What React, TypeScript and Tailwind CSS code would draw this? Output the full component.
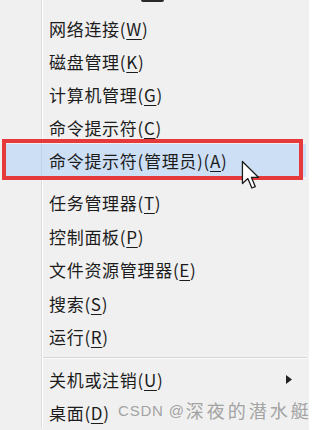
import React from "react";

type Item = { label: string; key: string; sub?: boolean };

const groupA: Item[] = [
  { label: "网络连接", key: "W" },
  { label: "磁盘管理", key: "K" },
  { label: "计算机管理", key: "G" },
  { label: "命令提示符", key: "C" },
];

const groupB: Item[] = [
  { label: "任务管理器", key: "T" },
  { label: "控制面板", key: "P" },
  { label: "文件资源管理器", key: "E" },
  { label: "搜索", key: "S" },
  { label: "运行", key: "R" },
];

const groupC: Item[] = [
  { label: "关机或注销", key: "U", sub: true },
  { label: "桌面", key: "D" },
];

const Label = ({ label, k }: { label: string; k: string }) => (
  <span className="text-[17px] tracking-[0.7px] text-[#1c1c1c] leading-none whitespace-nowrap">
    {label}(<span className="underline underline-offset-[3px] decoration-1">{k}</span>)
  </span>
);

const Row = ({ item, h }: { item: Item; h: string }) => (
  <div className={`flex items-center ${h}`}>
    <div className="w-[42px] self-stretch border-r border-[#dcdcdc] shadow-[1px_0_0_#ffffff]" />
    <div className="pl-[7px] flex-1 flex items-center">
      <Label label={item.label} k={item.key} />
      {item.sub && (
        <svg width="6" height="9" viewBox="0 0 6 9" className="ml-auto mr-[17px]">
          <path d="M0 0 L6 4.5 L0 9 Z" fill="#222" />
        </svg>
      )}
    </div>
  </div>
);

const Separator = ({ line }: { line: boolean }) => (
  <div className="flex h-[9px]">
    <div className="w-[42px] self-stretch border-r border-[#dcdcdc] shadow-[1px_0_0_#ffffff]" />
    <div className="flex-1 flex items-center pl-[1px] pr-[2px]">
      {line && <div className="w-full h-[2px] border-t border-[#d6d6d6] bg-white/70" />}
    </div>
  </div>
);

export default function App() {
  return (
    <div
      className="relative w-[324px] h-[430px] bg-white overflow-hidden"
      style={{ fontFamily: '"Noto Sans CJK SC", "Noto Sans", sans-serif' }}
    >
      <div className="w-[309px] h-full bg-[#f0f0f0] flex flex-col">
        <div className="flex h-[12px]">
          <div className="w-[42px] self-stretch border-r border-[#dcdcdc] shadow-[1px_0_0_#ffffff]" />
          <div className="ml-[99px] w-[23px] h-[2px] bg-[#2a2a2a] rounded-b" />
        </div>
        {groupA.map((it) => (
          <Row key={it.key} item={it} h="h-[33px]" />
        ))}
        <div className="flex items-center h-[33px] ml-[2px] mr-[3px] bg-[#cddff5]">
          <div className="w-[40px] self-stretch border-r border-[#c3d3e6]" />
          <div className="pl-[7px]">
            <Label label="命令提示符(管理员)" k="A" />
          </div>
        </div>
        <Separator line={false} />
        {groupB.map((it) => (
          <Row key={it.key} item={it} h="h-[33.5px]" />
        ))}
        <Separator line={true} />
        {groupC.map((it) => (
          <Row key={it.key} item={it} h="h-[33px]" />
        ))}
      </div>

      {/* red annotation box */}
      <div className="absolute left-[2px] top-[139px] w-[301px] h-[41px] border-[4px] border-[#e5393c]" />

      {/* mouse cursor */}
      <svg
        className="absolute left-[241px] top-[160px]"
        width="20"
        height="30"
        viewBox="0 0 14 21"
      >
        <path
          d="M1 1 L1 16.5 L4.8 13 L7.6 19.6 L10 18.6 L7.3 12.2 L12.3 12.2 Z"
          fill="#ffffff"
          stroke="#1a1a1a"
          strokeWidth="0.9"
          strokeLinejoin="round"
        />
      </svg>

      {/* watermark */}
      <div className="absolute left-[118px] top-[401px] flex items-center whitespace-nowrap text-[#a3a3a3] leading-none">
        <span className="text-[15px] tracking-[0.8px]" style={{ fontFamily: '"Liberation Sans", sans-serif' }}>
          CSDN @
        </span>
        <span className="text-[18px] tracking-[3px] ml-[1px]">深夜的潜水艇</span>
      </div>
    </div>
  );
}
